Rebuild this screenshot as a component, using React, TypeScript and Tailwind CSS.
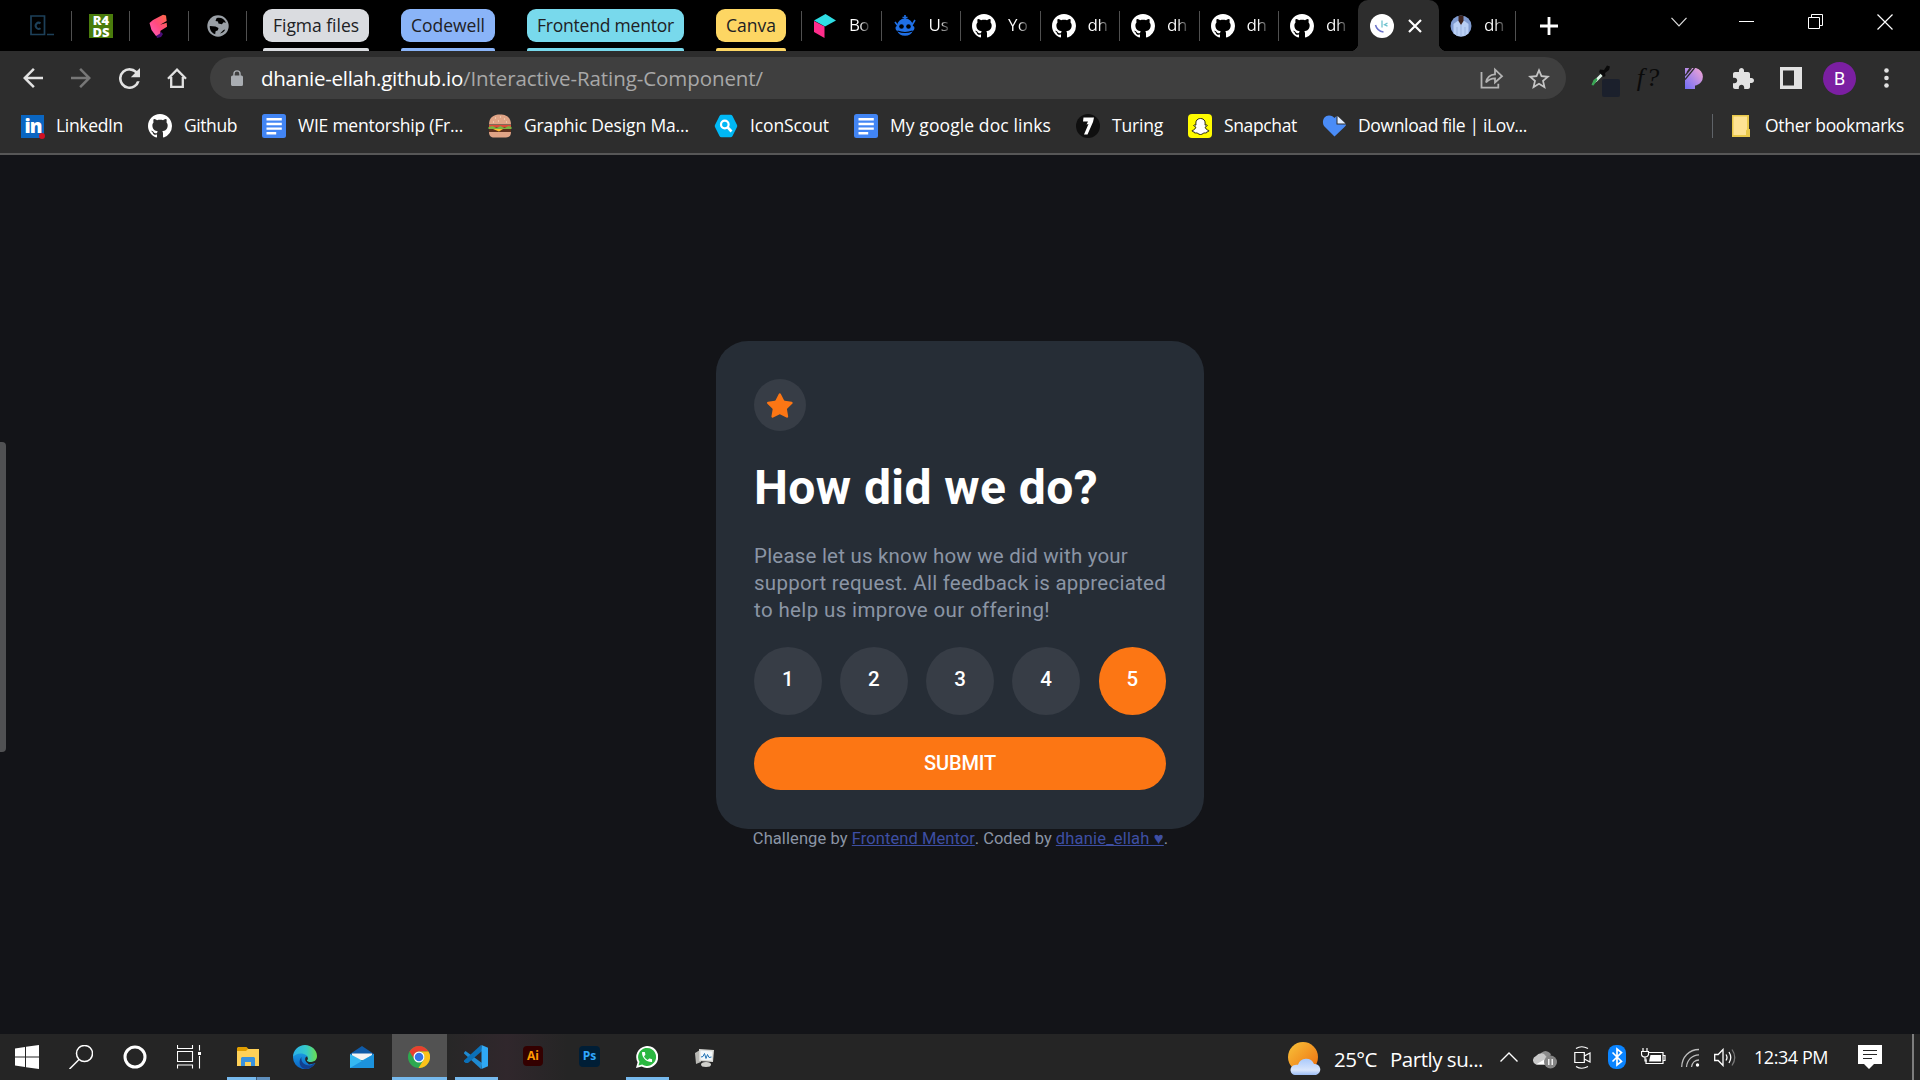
import { useLayoutEffect, useRef, type ReactNode } from "react";
import { FaSnapchatGhost } from "react-icons/fa";

/* Spreads a run of text over the width of its box by adjusting the tracking. */
function Fit({ children, className }: { children: ReactNode; className: string }) {
  const outer = useRef<HTMLSpanElement>(null);
  const inner = useRef<HTMLSpanElement>(null);
  useLayoutEffect(() => {
    const o = outer.current!;
    const i = inner.current!;
    i.style.letterSpacing = "0px";
    const n = (i.textContent || "").length;
    i.style.letterSpacing = (o.getBoundingClientRect().width - i.getBoundingClientRect().width) / n + "px";
  }, []);
  return (
    <span ref={outer} className={"block shrink-0 whitespace-nowrap " + className}>
      <span ref={inner}>{children}</span>
    </span>
  );
}

function Github({ className = "" }: { className?: string }) {
  return (
    <svg viewBox="0 0 16 16" className={"size-6 shrink-0 fill-white " + className}>
      <path d="M8 0C3.58 0 0 3.58 0 8c0 3.54 2.29 6.53 5.47 7.59.4.07.55-.17.55-.38 0-.19-.01-.82-.01-1.49-2.01.37-2.53-.49-2.69-.94-.09-.23-.48-.94-.82-1.13-.28-.15-.68-.52-.01-.53.63-.01 1.08.58 1.23.82.72 1.21 1.87.87 2.33.66.07-.52.28-.87.51-1.07-1.78-.2-3.64-.89-3.64-3.95 0-.87.31-1.59.82-2.15-.08-.2-.36-1.02.08-2.12 0 0 .67-.21 2.2.82.64-.18 1.32-.27 2-.27.68 0 1.36.09 2 .27 1.53-1.04 2.2-.82 2.2-.82.44 1.1.16 1.92.08 2.12.51.56.82 1.27.82 2.15 0 3.07-1.87 3.75-3.65 3.95.29.25.54.73.54 1.48 0 1.07-.01 1.93-.01 2.2 0 .21.15.46.55.38A8.013 8.013 0 0 0 16 8c0-4.42-3.58-8-8-8z" />
    </svg>
  );
}

function Docs() {
  return (
    <svg viewBox="0 0 24 24" className="size-6 shrink-0">
      <rect width="24" height="24" rx="2.5" fill="#4285f4" />
      <path d="M4.5 5.2h15.3M4.5 10h15.3M4.5 14.6h15.3M4.5 19.2h9.7" stroke="#fff" strokeWidth="2.4" />
    </svg>
  );
}

function Sep() {
  return <span className="h-[30px] w-px shrink-0 bg-[#505050]" />;
}

function TabTitle({ children }: { children: ReactNode }) {
  return (
    <Fit className="mb-px ml-3 w-5 bg-linear-to-r from-white from-55% to-[#333] bg-clip-text text-[17px] text-transparent">
      {children}
    </Fit>
  );
}

function Tab({ icon, label }: { icon: ReactNode; label: string }) {
  return (
    <div className="flex h-[51px] w-[79.5px] shrink-0 items-center">
      <span className="ml-[11px] flex w-6 shrink-0 justify-center">{icon}</span>
      <TabTitle>{label}</TabTitle>
      <span className="ml-auto" />
      <Sep />
    </div>
  );
}

function Group({ label, width, tone }: { label: string; width: string; tone: string }) {
  return (
    <div className={"flex h-[51px] shrink-0 flex-col pt-[9px] " + width}>
      <div className={"flex h-[33px] items-center rounded-[9px] px-[10px] pb-px text-[#202124] " + tone}>
        <Fit className="w-full text-[17.5px] leading-8">{label}</Fit>
      </div>
      <div className={"mt-auto h-[3px] rounded-t-[2px] " + tone} />
    </div>
  );
}

function TabStrip() {
  return (
    <div className="flex h-[51px] items-center bg-black text-white">
      <svg viewBox="0 0 24 21" className="ml-[30px] h-[21px] w-6 shrink-0" fill="none" stroke="#1d4059">
        <path d="M1 1h13.5v18.500H1z" strokeWidth="1.7" />
        <path d="M10.500 8.400a3 3 0 1 0 0 4.800" strokeWidth="2" />
        <path d="M17 19.500h7" strokeWidth="1.500" />
      </svg>
      <span className="ml-[17px]" />
      <Sep />
      <span className="ml-[17px] w-6 shrink-0 bg-[#4a7c0c] text-center text-[13px] leading-3 font-extrabold text-white">
        R4
        <br />
        DS
      </span>
      <span className="ml-[16px]" />
      <Sep />
      <svg viewBox="0 0 19 24" className="ml-[19px] h-6 w-[19px] shrink-0">
        <defs>
          <linearGradient id="flik" x1="1" y1="0" x2="0" y2="1">
            <stop offset="0" stopColor="#ff6b45" />
            <stop offset=".5" stopColor="#ff4b7d" />
            <stop offset="1" stopColor="#ff5cc0" />
          </linearGradient>
        </defs>
        <path d="M7 20.500l5-2.500 2 2-2 3-4 1z" fill="#4b0c78" />
        <path d="M.5 9L4 6 14 .8l3 .6.7 5.700-6.500 3.700 6.500-2 .3 4-6.500 4-.5 2.700-4 2.500L2.500 16z" fill="url(#flik)" />
      </svg>
      <span className="ml-[20px]" />
      <Sep />
      <svg viewBox="0 0 22 22" className="ml-[18px] size-[22px] shrink-0">
        <circle cx="11" cy="11" r="10.700" fill="#9aa0a6" />
        <path d="M9.500 3.200c3.500-1.400 8 .4 9.500 4.600l-2.500-.6-1.600 2-3.500-.7-.4-2-2.500-.4zM2.800 11l5.700.5 3 1.500-.6 2.300-2.300 1-.4 3c-3-1-5.700-4-5.400-8.300zM13 18.500l3.500-3.500 1.800-.4c-1 2.200-3.300 3.800-5.300 3.900z" fill="#000" />
      </svg>
      <span className="ml-[17px]" />
      <Sep />
      <div className="ml-4 flex shrink-0 gap-8">
        <Group label="Figma files" width="w-[106px]" tone="bg-[#dadce0]" />
        <Group label="Codewell" width="w-[94px]" tone="bg-[#8ab4f8]" />
        <Group label="Frontend mentor" width="w-[157px]" tone="bg-[#78d9ec]" />
        <Group label="Canva" width="w-[70px]" tone="bg-[#fdd663]" />
      </div>
      <span className="ml-[15px]" />
      <Sep />
      <Tab
        label="Bo"
        icon={
          <svg viewBox="0 0 24 24" className="size-6">
            <path d="M1 6.500L12.500 0 23 6.500 12 12.500z" fill="#2fdde4" />
            <path d="M1 7l10.500 5.500V24L1 18z" fill="#ff2d8b" />
          </svg>
        }
      />
      <Tab
        label="Us"
        icon={
          <svg viewBox="0 0 24 24" className="size-6">
            <path d="M12 1v6M9.500 3.500h5M2 8l3 4M22 6l-3 5" stroke="#1f6fe5" strokeWidth="1.600" />
            <path d="M4 12a8 7.500 0 0 1 16 0c2 0 2 4-.3 5a8 6.500 0 0 1-15.400 0C2 16 2 12 4 12z" fill="#1f6fe5" />
            <circle cx="8.500" cy="12.500" r="2.300" />
            <circle cx="15.500" cy="12.500" r="2.300" />
            <path d="M4.500 17q7.500 3 15 0" stroke="#000" strokeWidth="1.200" fill="none" />
          </svg>
        }
      />
      <Tab label="Yo" icon={<Github />} />
      <Tab label="dh" icon={<Github />} />
      <Tab label="dh" icon={<Github />} />
      <Tab label="dh" icon={<Github />} />
      <div className="flex w-[79px] shrink-0 items-center">
        <span className="ml-[11px]">
          <Github />
        </span>
        <TabTitle>dh</TabTitle>
      </div>
      <div className="-mr-2 -ml-[8px] flex h-[51px] w-[97px] shrink-0">
        <span className="size-2 self-end bg-[radial-gradient(circle_at_0_0,#000_8px,#2d2d2d_8.5px)]" />
        <div className="flex h-[51px] w-[81px] items-center rounded-t-[10px] bg-[#2d2d2d]">
          <svg viewBox="0 0 24 24" className="ml-3 size-6 shrink-0" fill="none">
            <circle cx="12" cy="12" r="12" fill="#fff" />
            <path d="M5.500 11q1.500 6 8 7" stroke="#6a72c9" strokeWidth="1.500" />
            <path d="M12 6.500v7M17.500 9l-3 1.700 3 1.500" stroke="#6fc3cf" strokeWidth="1.300" />
          </svg>
          <svg viewBox="0 0 14 14" className="ml-[14px] size-[14px]" stroke="#fff" strokeWidth="2.200">
            <path d="M1 1l12 12M13 1L1 13" />
          </svg>
        </div>
        <span className="size-2 self-end bg-[radial-gradient(circle_at_100%_0,#000_8px,#2d2d2d_8.5px)]" />
      </div>
      <div className="-ml-px flex w-[78px] shrink-0 items-center">
        <svg viewBox="0 0 22 22" className="ml-3 size-[22px] shrink-0">
          <clipPath id="face">
            <circle cx="11" cy="11" r="10.500" />
          </clipPath>
          <g clipPath="url(#face)">
            <rect width="22" height="22" fill="#7f9bd0" />
            <path d="M3.500 22V9l4-3h7l4 3v13z" fill="#b9d0f5" />
            <path d="M8.500 0h5v6l-2.500 4-2.500-4z" fill="#3d221c" />
            <path d="M11 10v12M7 12v10M15 12v10" stroke="#8fa9d6" strokeWidth=".7" />
          </g>
        </svg>
        <TabTitle>dh</TabTitle>
        <span className="ml-auto" />
        <Sep />
      </div>
      <svg viewBox="0 0 18 18" className="ml-[24px] size-[18px] shrink-0" stroke="#fff" strokeWidth="2.800">
        <path d="M9 0v18M0 9h18" />
      </svg>
      <div className="mr-[27px] mb-[8px] ml-auto flex items-center">
        <svg viewBox="0 0 16 10" className="h-[10px] w-4" fill="none" stroke="#ddd" strokeWidth="1.200">
          <path d="M.5.800L8 8.800 15.500.800" />
        </svg>
        <svg viewBox="0 0 15 1" className="ml-[52px] h-px w-[15px]">
          <path d="M0 0h15v1H0z" fill="#fff" />
        </svg>
        <svg viewBox="0 0 15 15" className="ml-[54px] size-[15px]" fill="none" stroke="#fff">
          <path d="M.5 3.500h11v11H.5zM3.500 3.500v-3h11v11h-3" />
        </svg>
        <svg viewBox="0 0 16 16" className="ml-[54px] size-4" stroke="#fff" strokeWidth="1.200">
          <path d="M.5.500l15 15M15.500.500l-15 15" />
        </svg>
      </div>
    </div>
  );
}

function Toolbar() {
  return (
    <div className="flex h-[54px] items-center">
      <svg viewBox="4 4 16 16" className="ml-[23px] size-5 fill-[#e2e2e2]">
        <path d="M20 11H7.830l5.590-5.590L12 4l-8 8 8 8 1.410-1.410L7.830 13H20v-2z" />
      </svg>
      <svg viewBox="4 4 16 16" className="ml-[28px] size-5 fill-[#777]">
        <path d="M12 4l-1.410 1.410L16.170 11H4v2h12.170l-5.580 5.590L12 20l8-8z" />
      </svg>
      <svg viewBox="4 4 16 16" className="ml-[28px] size-[21px] fill-[#e2e2e2]">
        <path d="M17.650 6.350A7.958 7.958 0 0 0 12 4a8 8 0 1 0 7.730 10h-2.080A6 6 0 1 1 12 6c1.660 0 3.140.690 4.220 1.780L13 11h7V4l-2.350 2.350z" />
      </svg>
      <svg viewBox="0 0 20 20" className="ml-[27px] size-5" fill="none" stroke="#e2e2e2" strokeWidth="2.300">
        <path d="M1 10.800L10 1.700l9 9.100M4.200 9v9.800h11.600V9" />
      </svg>
      <div className="ml-[23px] flex h-[42px] w-[1356px] shrink-0 items-center rounded-full bg-[#3f3f3f]">
        <svg viewBox="4 1 16 21" className="ml-[21px] h-4 w-3 fill-[#a9adb2]">
          <path d="M18 8h-1V6A5 5 0 0 0 7 6v2H6a2 2 0 0 0-2 2v10c0 1.100.9 2 2 2h12a2 2 0 0 0 2-2V10a2 2 0 0 0-2-2zM8.900 8V6a3.100 3.100 0 0 1 6.200 0v2z" />
        </svg>
        <div className="mt-px ml-[18px] flex text-[20.5px] text-[#a8a8a8]">
          <Fit className="w-[202px] text-white">dhanie-ellah.github.io</Fit>
          <Fit className="w-[300px]">/Interactive-Rating-Component/</Fit>
        </div>
        <svg viewBox="0 0 24 22" className="mr-[24px] ml-auto h-[22px] w-6" fill="none" stroke="#b4b4b4" strokeWidth="1.800">
          <path d="M1.500 5v15.700h16.800v-4" />
          <path d="M6 15.500c1-5.500 4-8 9-8.200V2.500l7 6.700-7 6.300v-4.200c-4 0-6.500 1-9 4.200z" />
        </svg>
        <svg viewBox="2 2 20 19" className="mr-[16px] h-[21px] w-[22px] fill-[#c4c4c4]">
          <path d="M22 9.240l-7.190-.62L12 2 9.190 8.630 2 9.240l5.460 4.730L5.820 21 12 17.270 18.180 21l-1.630-7.030L22 9.240zM12 15.400l-3.760 2.270 1-4.280-3.320-2.880 4.380-.38L12 6.100l1.710 4.040 4.380.38-3.320 2.880 1 4.280L12 15.400z" />
        </svg>
      </div>
      <svg viewBox="0 0 30 34" className="-mb-[7px] ml-[24px] h-[34px] w-[30px] shrink-0">
        <path d="M2 19.500l3-5 7-7 2 2-7 7z" fill="#dff3e6" />
        <path d="M1.500 20l2-5 3-2 1 2-4 5.500z" fill="#3aa655" />
        <path d="M10 4.500l4 .5 3-4.500 3 1-1 3.500-4 3 .500 3-2 1-4.500-5z" fill="#0a0a0a" />
        <rect x="12" y="14" width="18" height="18" rx="2" fill="#1b202c" />
      </svg>
      <span className="ml-[15px] w-[26px] text-center font-['Liberation_Serif'] text-[26px] leading-6 text-[#0a0a0a]">
        <i>f</i>&#8202;<i>?</i>
      </span>
      <svg viewBox="0 0 20 21" className="ml-[24px] h-[21px] w-5">
        <defs>
          <linearGradient id="pp" x1="1" y1="0" x2="0" y2="1">
            <stop offset="0" stopColor="#f9a8d4" />
            <stop offset="1" stopColor="#6f6cf7" />
          </linearGradient>
        </defs>
        <path d="M0 0h11a9 9 0 0 1 0 17.500h-1V21H0z" fill="url(#pp)" />
        <path d="M0 7.500L6.500 0M0 11.500L9.500 0M2 4.500L5 0" stroke="#2d2d2d" strokeWidth="1.300" />
      </svg>
      <svg viewBox="2 1 21 21" className="ml-[28px] size-[21px] fill-[#e2e2e2]">
        <path d="M20.500 11H19V7c0-1.100-.9-2-2-2h-4V3.500C13 2.120 11.880 1 10.500 1S8 2.120 8 3.500V5H4c-1.100 0-1.990.9-1.990 2v3.800H3.500c1.490 0 2.700 1.210 2.700 2.700s-1.210 2.700-2.700 2.700H2V20c0 1.100.9 2 2 2h3.800v-1.500c0-1.490 1.210-2.700 2.700-2.700 1.490 0 2.700 1.210 2.700 2.700V22H17c1.100 0 2-.9 2-2v-4h1.500c1.380 0 2.500-1.120 2.500-2.500S21.880 11 20.500 11z" />
      </svg>
      <svg viewBox="0 0 22 22" className="ml-[26px] size-[22px]">
        <path d="M0 0h22v22H0zM3 3.500v15h11v-15z" fill="#e2e2e2" fillRule="evenodd" />
      </svg>
      <span className="ml-[21px] flex size-[33px] shrink-0 items-center justify-center rounded-full bg-[#7b1fa2] font-['Roboto'] text-[18px] text-white">
        B
      </span>
      <svg viewBox="0 0 5 20" className="ml-[28px] h-5 w-[5px] fill-[#e2e2e2]">
        <circle cx="2.500" cy="2.500" r="2.300" />
        <circle cx="2.500" cy="10" r="2.300" />
        <circle cx="2.500" cy="17.500" r="2.300" />
      </svg>
    </div>
  );
}

function Bookmark({ icon, label, width }: { icon: ReactNode; label: string; width: string }) {
  return (
    <div className="flex items-center gap-3">
      {icon}
      <Fit className={"-mt-px " + width}>{label}</Fit>
    </div>
  );
}

function Bookmarks() {
  return (
    <div className="flex h-[42px] items-center gap-[25px] pr-4 pl-[21px] text-[17.5px] text-white">
      <Bookmark
        label="LinkedIn"
        width="w-[67px]"
        icon={
          <span className="relative flex size-[23px] items-center justify-center bg-[#0a66c2] pl-px font-['Open_Sans'] text-[19px] leading-5 font-extrabold tracking-[-1px]">
            in
            <span className="absolute -right-px -bottom-px size-[6px] rounded-full bg-[#d11124]" />
          </span>
        }
      />
      <Bookmark label="Github" width="w-[53px]" icon={<Github />} />
      <Bookmark label="WIE mentorship (Fr..." width="w-[165px]" icon={<Docs />} />
      <Bookmark
        label="Graphic Design Ma..."
        width="w-[165px]"
        icon={
          <svg viewBox="0 0 24 24" className="size-6 shrink-0">
            <path d="M1 10.500C1 3 6 .5 12 .5s11 2.500 11 10z" fill="#e0a486" />
            <path d="M7 4h1M12 3h1M16 5h1M10 7h1M5 8h1M18 8h1" stroke="#fbe6c8" strokeWidth="1.200" />
            <path d="M1 11h22v2.500H1z" fill="#dd4b39" />
            <path d="M.5 13l4-1 4 2 4-2 4 2 4-2 3 1v2H.5z" fill="#7cb342" />
            <path d="M1 15h22v3H1z" fill="#5d2f1d" />
            <path d="M5 15h10l-4 2.500z" fill="#fbc02d" />
            <path d="M1 18h22c0 4-2 5.500-5 5.500H6C3 23.500 1 22 1 18z" fill="#e0a486" />
          </svg>
        }
      />
      <Bookmark
        label="IconScout"
        width="w-[79px]"
        icon={
          <svg viewBox="0 0 24 24" className="size-6 shrink-0" fill="none">
            <path d="M7.500 3h9l4.500 9-4.500 9h-9L3 12z" fill="#00b8f5" stroke="#00b8f5" strokeWidth="4.500" strokeLinejoin="round" />
            <circle cx="10.800" cy="10.500" r="3.800" stroke="#fff" strokeWidth="2.200" />
            <path d="M13.500 13.200l4 4.300" stroke="#fff" strokeWidth="2.600" />
          </svg>
        }
      />
      <Bookmark label="My google doc links" width="w-[161px]" icon={<Docs />} />
      <Bookmark
        label="Turing"
        width="w-[51px]"
        icon={
          <svg viewBox="0 0 24 24" className="size-6 shrink-0">
            <circle cx="12" cy="12" r="12" fill="#0f0f0f" />
            <path d="M7.500 3.500H18L17 8l-5.500 12.500H8L12.500 10l-2 .5 1.500-3H7z" fill="#fff" />
          </svg>
        }
      />
      <Bookmark
        label="Snapchat"
        width="w-[73px]"
        icon={
          <span className="flex size-6 shrink-0 items-center justify-center rounded-[4px] bg-[#fffc00]">
            <FaSnapchatGhost className="size-[17px] overflow-visible fill-white stroke-black stroke-[26px]" />
          </span>
        }
      />
      <Bookmark
        label="Download file | iLov..."
        width="w-[169px]"
        icon={
          <svg viewBox="0 0 24 24" className="size-6 shrink-0">
            <path d="M12.500 22.500L2 12C-.5 8 1.500 1.500 7 1.500c3 0 4 1 5.500 2.500L14.500 2v8.500H24c0 1-.5 1.500-1.500 2.500z" fill="#4a8cf7" />
            <path d="M15.500 2l8 7.500h-8z" fill="#e6f0ff" />
          </svg>
        }
      />
      <div className="ml-auto flex items-center">
        <span className="h-6 w-px bg-[#5f6368]" />
        <svg viewBox="0 0 18 22" className="mr-[15px] ml-[19px] h-[22px] w-[18px]">
          <path d="M0 0h17v14h1v8H0z" fill="#e8c84a" />
          <path d="M1.500 1.500H15v13l-1 1V20H1.500z" fill="#fde293" />
        </svg>
        <Fit className="-mt-px w-[139px]">Other bookmarks</Fit>
      </div>
    </div>
  );
}

function RatingCard() {
  return (
    <div className="flex h-[488px] w-[488px] flex-col rounded-[32px] bg-[#262d36] p-[38px]">
      <span className="flex size-[52px] shrink-0 items-center justify-center rounded-full bg-[#373d46]">
        <svg viewBox="0 0 17 16" className="h-[25px] w-[26px] fill-[#fc7614]">
          <path d="m9.067.43 1.990 4.031c.112.228.33.386.58.422l4.450.647a.772.772 0 0 1 .427 1.316l-3.220 3.138a.773.773 0 0 0-.222.683l.76 4.431a.772.772 0 0 1-1.120.813l-3.980-2.092a.773.773 0 0 0-.718 0l-3.980 2.092a.772.772 0 0 1-1.119-.813l.76-4.431a.77.77 0 0 0-.222-.683L.233 6.846A.772.772 0 0 1 .661 5.530l4.449-.647a.772.772 0 0 0 .58-.422L7.680.43a.774.774 0 0 1 1.387 0Z" />
        </svg>
      </span>
      <h1 className="mt-[28px] h-[60px] text-[48px] leading-[58px] font-bold text-white">
        <Fit className="w-[344px]">How did we do?</Fit>
      </h1>
      <div className="mt-[24px] text-[20.5px] leading-[27px] text-[#8b95a5]">
        <Fit className="w-[374px]">Please let us know how we did with your</Fit>
        <Fit className="w-[412px]">support request. All feedback is appreciated</Fit>
        <Fit className="w-[296px]">to help us improve our offering!</Fit>
      </div>
      <div className="mt-[23px] flex justify-between text-[20.5px] font-medium text-white">
        {[1, 2, 3, 4, 5].map((n) => (
          <button
            key={n}
            className={
              "h-[68px] w-[67.5px] rounded-full pb-[3px] " + (n === 5 ? "bg-[#fc7614]" : "bg-[#373d46]")
            }
          >
            {n}
          </button>
        ))}
      </div>
      <button className="mt-[22px] flex h-[53px] shrink-0 items-center justify-center rounded-[27px] bg-[#fc7614] pb-px text-[20px] font-medium text-white">
        <Fit className="w-[72px]">SUBMIT</Fit>
      </button>
    </div>
  );
}

function Page() {
  return (
    <main className="flex h-[879px] bg-[#131418] font-['Roboto']">
      <div className="mt-[287px] h-[310px] w-[6px] rounded-r-[4px] bg-[#505153]" />
      <div className="ml-[710px] flex w-[488px] flex-col items-center pt-[186px]">
        <RatingCard />
        <div className="flex pl-px text-[16.5px] leading-5 text-[#8b95a5]">
          <Fit className="w-[99px] whitespace-pre">{"Challenge by "}</Fit>
          <Fit className="w-[123px] text-[#3e4fa3] underline">Frontend Mentor</Fit>
          <Fit className="w-[81px] whitespace-pre">{". Coded by "}</Fit>
          <Fit className="w-[108px] text-[#3e4fa3] underline">dhanie_ellah ♥</Fit>
          <span>.</span>
        </div>
      </div>
    </main>
  );
}

function Taskbar() {
  return (
    <footer className="flex h-[46px] items-center bg-[#252525] text-white">
      <svg viewBox="0 0 24 24" className="ml-[15px] size-6 fill-white">
        <path d="M0 3.400l10-1.400v9.500H0zM11 1.800L24 0v11.500H11zM0 12.500h10V22L0 20.600zM11 12.500h13V24l-13-1.800z" />
      </svg>
      <svg viewBox="0 0 24 24" className="ml-[30px] size-6" fill="none" stroke="#fff" strokeWidth="1.500">
        <circle cx="15.500" cy="8.500" r="8" />
        <path d="M10 14.500L.500 24" />
      </svg>
      <svg viewBox="0 0 24 24" className="ml-[30px] size-6" fill="none" stroke="#fff" strokeWidth="3">
        <circle cx="12" cy="12" r="10" />
      </svg>
      <svg viewBox="0 0 24 24" className="ml-[30px] size-6" fill="none" stroke="#fff" strokeWidth="1.100">
        <path d="M.500 6.500h15v10h-15zM.500 0v3.500h15V0M.500 23.500V20h15v3.500M22.500 0v5.500M22.500 11v12.500" />
        <path d="M21 7h3v3h-3z" fill="#fff" stroke="none" />
      </svg>
      <div className="ml-[26px] flex h-[46px] w-[43px] flex-col">
        <svg viewBox="0 0 22 20" className="mt-[13px] ml-[10px] h-5 w-[22px]">
          <path d="M0 1l1-1h8.500l2 2v3H0z" fill="#e09d00" />
          <path d="M0 4h9l2-2h11v17H0z" fill="#ffd158" />
          <path d="M4 19v-8l1-1h12l1 1v8h-4v-4H8v4z" fill="#3a92dd" />
        </svg>
        <div className="mt-auto flex h-[3px] w-[43px] bg-[#5f8fbd]">
          <span className="w-[29px] bg-[#76b9ed]" />
          <span className="w-px bg-[#3d5a77]" />
        </div>
      </div>
      <svg viewBox="0 0 24 24" className="ml-[23px] size-6">
        <defs>
          <linearGradient id="e1" x1="0" x2="1">
            <stop offset="0" stopColor="#2ab1ea" />
            <stop offset=".55" stopColor="#36c9c9" />
            <stop offset="1" stopColor="#6be04e" />
          </linearGradient>
          <linearGradient id="e2" x1="0" y1="0" x2="0" y2="1">
            <stop offset="0" stopColor="#1b9de2" />
            <stop offset="1" stopColor="#0b62c4" />
          </linearGradient>
        </defs>
        <path d="M0 12C1 8.500 4 7 7.500 7c4 0 7 2.500 7.500 5.500l-2 4 3 3 6.500-1.500A12 12 0 0 1 0 12z" fill="url(#e2)" />
        <path d="M8.500 12c-1 5 3 9 9 8.500l4.500-2.500a12 12 0 0 1-8 6C6 24 5 16 8.500 12z" fill="#12408f" />
        <path d="M24 11c0 6-6 7-9.500 5.500-1-.5-.5-1.500.2-2.500C16 11 12 8.500 7.500 8.500 4 8.500 1 10.500 0 12 0 5 5.500 0 12 0s12 5 12 11z" fill="url(#e1)" />
        <path d="M14.500 16.500c-1-.5-.5-1.500.2-2.500.3-1-.2-1.800-1.200-2.500-2.500 2-1.500 6 3 7 2.500.5 5-.5 5.800-1.600l.7-1c-3 1.300-6 1.400-8.500.6z" fill="#252525" />
      </svg>
      <svg viewBox="0 0 24 22" className="ml-[33px] h-[22px] w-6">
        <path d="M0 8l12-8 12 8v3H0z" fill="#0f5ba8" />
        <path d="M2 7.500h20V14H2z" fill="#f4f4f4" />
        <path d="M0 8l12 6.500L24 8v14H0z" fill="#35b8f1" />
        <path d="M0 22L24 8v14z" fill="#1c93dd" />
      </svg>
      <div className="ml-[18px] flex h-[46px] w-[55px] flex-col bg-[#525252]">
        <svg viewBox="0 0 22 22" className="mt-[12px] ml-4 size-[22px] shrink-0">
          <circle cx="11" cy="11" r="11" fill="#2da94f" />
          <path d="M1.500 5.500A11 11 0 0 1 20.500 5.500H11a5.500 5.500 0 0 0-5 7.500z" fill="#e8402f" />
          <path d="M20.500 5.500A11 11 0 0 1 10.500 22l5.300-8.500A5.500 5.500 0 0 0 11 5.500z" fill="#fdc21a" />
          <circle cx="11" cy="11" r="5.500" fill="#fff" />
          <circle cx="11" cy="11" r="4.300" fill="#3574e8" />
        </svg>
        <div className="mt-auto h-[3px] w-[55px] bg-[#76b9ed]" />
      </div>
      <div className="flex h-[46px] w-[120px] items-center bg-linear-to-r from-[#272727] via-[#30272c] to-[#252525]">
        <div className="ml-2 flex h-[46px] w-[43px] shrink-0 flex-col">
          <svg viewBox="0 0 24 24" className="mt-[11px] ml-[9px] size-6 shrink-0">
            <path d="M1.500 6L0 7.500v1L17 24l1-6z" fill="#1f8ad2" />
            <path d="M1.500 18L0 16.500v-1L17 0l1 6-14 12z" fill="#0b70b8" />
            <path d="M17.500 0L24 2.800v18.400L17.500 24z" fill="#2fa8f4" />
          </svg>
          <div className="mt-auto h-[3px] w-[43px] bg-[#76b9ed]" />
        </div>
        <span className="mb-[2px] ml-[25px] flex size-5 shrink-0 items-center justify-center rounded-[4px] bg-[#330000] text-[12px] leading-5 font-bold text-[#ff9a00]">
          Ai
        </span>
      </div>
      <span className="mb-[2px] ml-[12px] flex size-[21px] items-center justify-center rounded-[4px] bg-[#001e36] text-[12px] leading-5 font-bold text-[#31a8ff]">
        Ps
      </span>
      <div className="ml-[26px] flex h-[46px] w-[43px] flex-col">
        <svg viewBox="0 0 22 22" className="mt-[12px] ml-[10px] size-[22px] shrink-0">
          <path d="M0 22l1.600-5.700A11 11 0 1 1 5.700 20.500z" fill="#fff" />
          <path d="M2.500 19.500l1-3.700a9 9 0 1 1 2.700 2.700z" fill="#2bb741" />
          <path
            transform="translate(4.300 4.200) scale(.56)"
            d="M6.620 10.790c1.440 2.830 3.760 5.140 6.590 6.590l2.200-2.200c.27-.27.67-.36 1.020-.24 1.120.37 2.330.57 3.570.57.55 0 1 .45 1 1V20c0 .55-.45 1-1 1-9.390 0-17-7.610-17-17 0-.55.45-1 1-1h3.500c.55 0 1 .45 1 1 0 1.250.2 2.450.57 3.570.11.35.03.74-.25 1.020l-2.200 2.200z"
            fill="#fff"
          />
        </svg>
        <div className="mt-auto h-[3px] w-[43px] bg-[#76b9ed]" />
      </div>
      <svg viewBox="0 0 20 20" className="mt-[2px] ml-[26px] size-5">
        <path d="M0 5l5-3 1 12-5 2z" fill="#b9b9b5" />
        <path d="M4 1l15 1-1 12-14-1z" fill="#d8d8d4" />
        <path d="M5.500 2.500l12 1-.8 9-11.200-.8z" fill="#f3f8fb" />
        <path d="M6 9l2-.5 1.500-3 1.500 5 1.500-4 1.500 3 2.500-.5" stroke="#2273b5" fill="none" />
        <ellipse cx="11" cy="16.500" rx="5" ry="2.500" fill="#d0d0cc" />
      </svg>

      <div className="ml-auto flex h-[46px] shrink-0 items-center">
        <svg viewBox="0 0 33 33" className="mt-[2px] size-[33px]">
          <defs>
            <linearGradient id="sun" x1="0" y1="0" x2="1" y2="1">
              <stop offset="0" stopColor="#f8c33a" />
              <stop offset="1" stopColor="#ee6c0e" />
            </linearGradient>
            <linearGradient id="cld" x1="0" y1="0" x2="0" y2="1">
              <stop offset="0" stopColor="#a9c9fb" />
              <stop offset=".7" stopColor="#d9e6fc" />
              <stop offset="1" stopColor="#9bbcf5" />
            </linearGradient>
          </defs>
          <circle cx="15" cy="15" r="15" fill="url(#sun)" />
          <path d="M8 33a5 5 0 0 1-1-10c1.500-.5 3-.3 3-.3a8.500 8.500 0 0 1 16-.7 5.600 5.600 0 0 1 2 11z" fill="url(#cld)" />
        </svg>
        <Fit className="mt-1 ml-[13px] w-[43px] text-[20.5px]">25°C</Fit>
        <Fit className="mt-1 ml-[13px] w-[93px] text-[20.5px]">Partly su...</Fit>
        <svg viewBox="0 0 18 10" className="ml-[17px] h-[10px] w-[18px]" fill="none" stroke="#fff" strokeWidth="1.400">
          <path d="M.500 9.500L9 1l8.500 8.500" />
        </svg>
        <svg viewBox="0 0 24 20" className="mt-1 ml-[15px] h-5 w-6">
          <path d="M8 4a6 6 0 0 1 10 2l-8 6z" fill="#8c8c8c" />
          <path d="M3 15.500a4.500 4.500 0 0 1 0-8.500 7 7 0 0 1 8-2l7 8v2.500z" fill="#c9c9c9" />
          <path d="M3 15.500l10-6 5 6z" fill="#fff" />
          <circle cx="17.500" cy="13" r="6.500" fill="#858585" />
          <path d="M15.800 10v6M19.200 10v6" stroke="#fff" strokeWidth="1.300" />
        </svg>
        <svg viewBox="0 0 17 23" className="ml-[17px] h-[23px] w-[17px]" fill="none" stroke="#fff" strokeWidth="1.200">
          <path d="M.8 6.500h9.500v10H.8zM10.300 10L16 7v9l-5.700-3M2 2.500q5.500-3.500 12 0M2 20.500q5.500 3.500 12 0" />
        </svg>
        <svg viewBox="0 0 18 24" className="ml-[17px] h-6 w-[18px]">
          <rect width="18" height="24" rx="8" fill="#0a84ff" />
          <path d="M4.500 7.500l9 9L9 20V4l4.500 3.500-9 9" fill="none" stroke="#fff" strokeWidth="1.700" />
        </svg>
        <svg viewBox="0 0 25 18" className="ml-[15px] h-[18px] w-[25px]" fill="none" stroke="#fff" strokeWidth="1.200">
          <path d="M8 4.500h14v11H5v-5M22.500 7.500h1.500v5h-1.500" />
          <path d="M9.500 7h10.500v6.500H8z" fill="#fff" stroke="none" />
          <path d="M2 0v3M6 0v3M.500 3.500h7v3q-.5 2.500-3.500 2.500T.500 6.500zM4 9v4h2" />
        </svg>
        <svg viewBox="0 0 19 20" className="mt-[2px] ml-[15px] h-5 w-[19px]" fill="none" stroke="#fff" strokeWidth="1.300">
          <path d="M.7 19C1 9 8 1.500 18 1.500M5.500 19C6 12 11 7 18 6.800M10.500 19c.5-4 3.500-7 7.500-7" stroke="#bdbdbd" />
          <circle cx="16.500" cy="17" r="1.700" fill="#fff" stroke="none" />
        </svg>
        <svg viewBox="0 0 22 19" className="ml-[14px] h-[19px] w-[22px]" fill="none" stroke="#fff" strokeWidth="1.300">
          <path d="M.7 6.500h3.500L9 1.500v16l-4.800-5H.7zM12 6.500q2 3 0 6M15 4q3.500 5.500 0 11" />
          <path d="M18 1.500q5.500 8 0 16" stroke="#777" />
        </svg>
        <Fit className="mt-px ml-[18px] w-[74px] text-[18px]">12:34 PM</Fit>
        <svg viewBox="0 0 24 24" className="ml-[30px] size-6">
          <path d="M0 0h24v19h-8l-5 5-5-5H0z" fill="#fff" />
          <path d="M5 5.500h14M5 9.500h14M5 13.500h9" stroke="#252525" strokeWidth="1.200" />
        </svg>
        <span className="mr-[6px] ml-[30px] h-[46px] w-[2px] bg-[#7d7d7d]" />
      </div>
    </footer>
  );
}

export default function App() {
  return (
    <div className="flex h-[1080px] w-[1920px] flex-col overflow-hidden bg-[#131418] font-['Open_Sans','Noto_Sans',sans-serif]">
      <TabStrip />
      <header className="h-[104px] border-b-2 border-[#575757] bg-[#2d2d2d]">
        <Toolbar />
        <Bookmarks />
      </header>
      <Page />
      <Taskbar />
    </div>
  );
}
